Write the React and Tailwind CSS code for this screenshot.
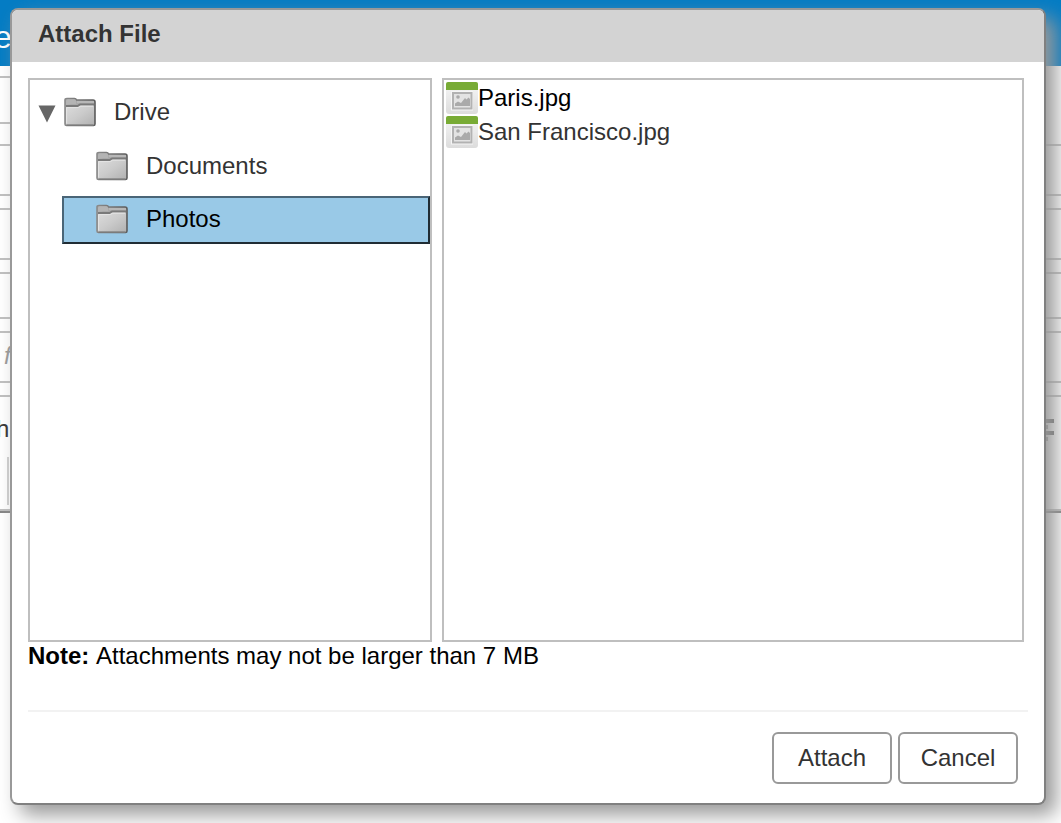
import { useState } from "react";

function FolderIcon() {
  return (
    <svg aria-hidden="true" viewBox="0 0 32 30" className="h-[30px] w-8 shrink-0">
      <defs>
        <linearGradient id="folder-front" x1="0" y1="0" x2="1" y2="1">
          <stop offset="0" stopColor="#dcdcdc" />
          <stop offset="0.5" stopColor="#cbcbcb" />
          <stop offset="1" stopColor="#b2b2b2" />
        </linearGradient>
        <linearGradient id="folder-edge" x1="0" y1="0" x2="1" y2="0">
          <stop offset="0" stopColor="#8a8a8a" />
          <stop offset="1" stopColor="#5c5c5c" />
        </linearGradient>
      </defs>
      <path d="M1 27V3Q1 1.500 3 1.500H10.500Q12 1.500 12.500 3H29Q31 3 31 5V27Q31 28.500 29.500 28.500H2.500Q1 28.500 1 27Z" fill="#a9a9a9" stroke="url(#folder-edge)" strokeWidth="1.6" />
      <path d="M2 8V4Q2 2.300 4 2.300H10Q12 2.300 12 4V7H8Z" fill="#b4b4b4" />
      <path d="M13 5H30" stroke="#bcbcbc" strokeWidth="1.6" />
      <path d="M2 9.500H14L16.500 8H30V27.500H2Z" fill="url(#folder-front)" />
      <path d="M2 9H13.500L16 7.500H30" fill="none" stroke="#7a7a7a" strokeWidth="1.8" />
      <path d="M2.600 26.500V10.600H14.300L16.800 9.200H29" fill="none" stroke="#e6e6e6" strokeWidth="0.9" />
      <path d="M2.500 28.200H29.500" stroke="#7b7b7b" strokeWidth="1.600" />
    </svg>
  );
}

function ImageIcon() {
  return (
    <svg aria-hidden="true" viewBox="0 0 32 32" className="h-8 w-8 shrink-0">
      <defs>
        <linearGradient id="image-page" x1="0" y1="0" x2="0" y2="1">
          <stop offset="0" stopColor="#f7f7f7" />
          <stop offset="1" stopColor="#dcdcdc" />
        </linearGradient>
      </defs>
      <rect width="32" height="32" rx="3" fill="url(#image-page)" />
      <path d="M0 8V2Q0 0 2 0H30Q32 0 32 2V8Z" fill="#78ab35" />
      <rect x="5" y="9" width="22" height="19.500" fill="#f6f6f6" />
      <rect x="7" y="11" width="18.500" height="15.500" fill="#e3e3e3" stroke="#b2b2b2" strokeWidth="2" />
      <path d="M9 24V21.500L12 19.500L15 21L19 16L20.500 17.500L22.500 15.500L24 17V24Z" fill="#aaaaaa" />
      <circle cx="12" cy="15" r="1.800" fill="#aaaaaa" />
    </svg>
  );
}

function Field({ className }) {
  return <div className={`border-y-2 border-[#bfbfbf] ${className}`} />;
}

function Composer() {
  return (
    <div className="overflow-hidden">
      <div className="flex h-[66px] items-center bg-[#047cc4]">
        <span className="-ml-[6px] pt-2 text-[32px] leading-8 text-white">e</span>
      </div>
      <div className="flex flex-col pt-[10px]">
        <div className="mb-5 h-12 w-1/2 border-y-2 border-[#bfbfbf]" />
        <Field className="mb-3 h-[52px]" />
        <Field className="mb-3 h-[52px]" />
        <Field className="mb-3 h-[47px]" />
        <Field className="mb-3 h-[52px]" />
        <div className="h-[118px] border-t-2 border-b-2 border-t-[#bfbfbf] border-b-[#858585]">
          <div className="flex h-full flex-col justify-between border-b-2 border-[#bfbfbf]">
            <div className="flex items-center justify-between pt-4">
              <span className="-ml-1 text-2xl text-[#333333]">h</span>
              <svg aria-hidden="true" viewBox="0 0 24 24" className="mr-[7px] h-6 w-6">
                <path d="M0 4H24M0 16H24" stroke="#666666" strokeWidth="4" />
                <path d="M0 10H18M0 22H18" stroke="#8c8c8c" strokeWidth="4" />
              </svg>
            </div>
            <div className="mb-1 ml-[7px] h-12 border-l-2 border-[#d0d0d0]" />
          </div>
        </div>
      </div>
    </div>
  );
}

const folders = ["Documents", "Photos"];
const files = ["Paris.jpg", "San Francisco.jpg"];

export default function App() {
  const [folder, setFolder] = useState("Photos");
  const [file, setFile] = useState("Paris.jpg");

  return (
    <div className="relative min-h-screen overflow-hidden bg-white font-['Liberation_Sans',Arial,sans-serif]">
      <div aria-hidden="true" className="absolute inset-x-0 top-0">
        <Composer />
        <span className="absolute top-[340px] left-1 text-2xl text-[#999999] italic">f</span>
      </div>

      <div className="relative pt-2 pr-[15px] pb-[18px] pl-[10px]">
        <section
          role="dialog"
          aria-labelledby="dialog-title"
          className="overflow-hidden rounded-lg border-2 border-t-[#999999] border-r-[#808080] border-b-[#808080] border-l-[#999999] bg-white shadow-[10px_10px_20px_#999999]"
        >
          <header className="h-[52px] bg-[#d3d3d3] px-[26px] pt-[10px]">
            <h1 id="dialog-title" className="text-2xl leading-7 font-bold text-[#333333]">Attach File</h1>
          </header>

          <div className="px-4 pt-4 pb-[19px]">
            <div className="flex h-[564px] gap-[10px] pr-1">
              <nav aria-label="Folders" className="w-[404px] shrink-0 border-2 border-[#bfbfbf] pt-2">
                <div className="flex h-12 items-center pl-2 text-2xl text-[#333333]">
                  <button type="button" aria-label="Collapse Drive" className="mr-2 flex w-[18px] justify-center pt-1">
                    <svg aria-hidden="true" viewBox="0 0 18 18" className="h-[18px] w-[18px]">
                      <path d="M0.500 0.500H17.500L9 17.500Z" fill="#666666" />
                    </svg>
                  </button>
                  <FolderIcon />
                  <span className="ml-[18px]">Drive</span>
                </div>
                <ul className="mt-[6px] ml-8 flex flex-col gap-[6px]">
                  {folders.map((name) => (
                    <li key={name}>
                      <button
                        type="button"
                        onClick={() => setFolder(name)}
                        className={`flex h-12 w-full items-center gap-[18px] border-2 pl-8 text-2xl ${
                          folder === name
                            ? "border-t-[#4a6577] border-r-[#202c34] border-b-[#202c34] border-l-[#4a6577] bg-[#99c9e7] pb-[2px] text-black"
                            : "border-transparent text-[#333333]"
                        }`}
                      >
                        <FolderIcon />
                        {name}
                      </button>
                    </li>
                  ))}
                </ul>
              </nav>
              <ul aria-label="Files" className="flex flex-1 flex-col gap-[2px] border-2 border-[#bfbfbf] p-[2px]">
                {files.map((name) => (
                  <li key={name}>
                    <button
                      type="button"
                      onClick={() => setFile(name)}
                      className={`flex h-8 w-full items-center text-2xl ${file === name ? "text-black" : "text-[#333333]"}`}
                    >
                      <ImageIcon />
                      {name}
                    </button>
                  </li>
                ))}
              </ul>
            </div>
            <p className="text-2xl leading-7 text-black">
              <strong>Note: </strong>Attachments may not be larger than 7 MB
            </p>
            <div className="mt-10 flex justify-end gap-[6px] border-t-2 border-[#f2f2f2] pt-5 pr-[10px]">
              <button type="button" className="h-[52px] w-[120px] rounded-md border-2 border-[#999999] text-2xl text-[#333333]">Attach</button>
              <button type="button" className="h-[52px] w-[120px] rounded-md border-2 border-[#999999] text-2xl text-[#333333]">Cancel</button>
            </div>
          </div>
        </section>
      </div>
    </div>
  );
}
